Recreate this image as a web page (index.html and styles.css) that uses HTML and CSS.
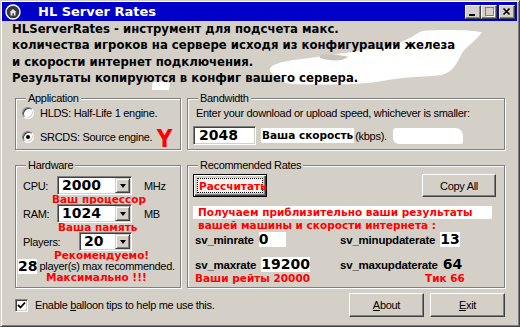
FILE: index.html
```html
<!DOCTYPE html>
<html>
<head>
<meta charset="utf-8">
<title>HL Server Rates</title>
<link rel="stylesheet" href="styles.css">
</head>
<body>
<div class="window">
  <div class="titlebar">
    <svg class="appicon" width="16" height="16" viewBox="0 0 16 16">
      <circle cx="8" cy="8" r="7" fill="#3a3a3a" stroke="#ffffff" stroke-width="1.4"/>
      <path d="M4.5 8.2 L8 5 L11.5 8.2 L10.5 8.2 L10.5 11.5 L5.5 11.5 L5.5 8.2 Z" fill="#e8e8e8"/>
      <rect x="7.3" y="9.3" width="1.6" height="2.2" fill="#3a3a3a"/>
    </svg>
    <span class="title">HL Server Rates</span>
    <div class="controls">
      <span class="cbtn"><svg width="14" height="12" viewBox="0 0 14 12"><rect x="3" y="8" width="6" height="2" fill="#000"/></svg></span>
      <span class="cbtn"><svg width="14" height="12" viewBox="0 0 14 12"><rect x="3.5" y="1.5" width="8" height="8" fill="none" stroke="#808080"/><rect x="3" y="1" width="9" height="1" fill="#808080"/><path d="M4.5 10.5 H12.5 V2.5" fill="none" stroke="#fff"/></svg></span>
      <span class="cbtn close"><svg width="14" height="12" viewBox="0 0 14 12"><path d="M3.5 2.5 L9.5 8.5 M9.5 2.5 L3.5 8.5" stroke="#000" stroke-width="1.6"/></svg></span>
    </div>
  </div>

  <div class="intro">
    <svg class="paint" width="516" height="70" viewBox="0 0 516 70">
      <path d="M420 10 C440 8 470 9 480 11 C476 18 466 24 460 32 C455 42 452 50 440 54 C420 56 400 56 380 60 C360 64 320 64 290 63 C280 62 272 56 268 50 C266 44 280 40 300 38 C330 34 360 30 390 24 C405 20 412 14 420 10 Z" fill="#ffffff"/>
      <path d="M150 62 C156 60 164 60 168 62 L167 69 L150 69 Z" fill="#ffffff"/>
      <path d="M318 34 C328 33 340 34 346 36 L340 39 C332 40 324 39 318 37 Z" fill="#c8c4bc"/>
    </svg>
    <p>HLServerRates - инструмент для подсчета макс.</p>
    <p>количества игроков на сервере исходя из конфигурации железа</p>
    <p>и скорости интернет подключения.</p>
    <p>Результаты копируются в конфиг вашего сервера.</p>
  </div>

  <div class="panels">
    <div class="group app">
      <span class="legend">Application</span>
      <div class="radio-row"><span class="radio"></span><span>HLDS: Half-Life 1 engine.</span></div>
      <div class="radio-row"><span class="radio checked"></span><span>SRCDS: Source engine.</span><span class="mark">Y</span></div>
    </div>

    <div class="group bandwidth">
      <span class="legend">Bandwidth</span>
      <div class="bw-text">Enter your download or upload speed, whichever is smaller:</div>
      <div class="bw-row">
        <div class="field"><span class="big">2048</span></div>
        <span class="speed">Ваша скорость</span><span class="kbps">(kbps).</span>
        <span class="blot"></span>
      </div>
    </div>

    <div class="group hardware">
      <span class="legend">Hardware</span>
      <div class="hw-row">
        <span class="hw-label">CPU:</span>
        <div class="combo w75"><span class="big">2000</span><span class="dd"></span></div>
        <span class="unit">MHz</span>
      </div>
      <div class="red hw-note n1">Ваш процессор</div>
      <div class="hw-row">
        <span class="hw-label">RAM:</span>
        <div class="combo w75"><span class="big">1024</span><span class="dd"></span></div>
        <span class="unit">MB</span>
      </div>
      <div class="red hw-note n2">Ваша память</div>
      <div class="hw-row">
        <span class="hw-label wide">Players:</span>
        <div class="combo w53"><span class="big">20</span><span class="dd"></span></div>
      </div>
      <div class="red hw-note n3">Рекомендуемо!</div>
      <div class="max-row"><span class="big white">28</span><span>player(s) max recommended.</span></div>
      <div class="red hw-note n4">Максимально !!!</div>
    </div>

    <div class="group rates">
      <span class="legend">Recommended Rates</span>
      <div class="btn-row">
        <button class="btn default"><span class="focus red">Рассчитать</span></button>
        <button class="btn">Copy All</button>
      </div>
      <div class="red note first">Получаем приблизительно ваши результаты</div>
      <div class="red note">вашей машины и скорости интернета :</div>
      <div class="rate-grid">
        <div class="rate"><span class="rlabel">sv_minrate</span><span class="big white pad0">0</span></div>
        <div class="rate"><span class="rlabel">sv_minupdaterate</span><span class="big white">13</span></div>
        <div class="rate second"><span class="rlabel">sv_maxrate</span><span class="big white">19200</span></div>
        <div class="rate second"><span class="rlabel">sv_maxupdaterate</span><span class="big">64</span></div>
        <div class="red rnote">Ваши рейты 20000</div>
        <div class="red rnote tick">Тик 66</div>
      </div>
    </div>
  </div>

  <div class="footer">
    <span class="check"><svg width="9" height="9" viewBox="0 0 9 9"><path d="M1 4 L3.5 6.5 L8 1.5" fill="none" stroke="#000" stroke-width="1.8"/></svg></span>
    <span class="check-label">Enable <u>b</u>alloon tips to help me use this.</span>
    <button class="btn fbtn"><u>A</u>bout</button>
    <button class="btn fbtn"><u>E</u>xit</button>
  </div>
</div>
</body>
</html>
```

FILE: styles.css
```css
* { box-sizing: border-box; }
html, body { margin: 0; padding: 0; }
body {
  width: 520px;
  height: 327px;
  overflow: hidden;
  background: #d4d0c8;
  font-family: "Liberation Sans", Arial, sans-serif;
  font-size: 11px;
  letter-spacing: -0.3px;
  color: #000;
}

.window {
  width: 520px;
  height: 327px;
  border: 1px solid;
  border-color: #d4d0c8 #404040 #404040 #d4d0c8;
  box-shadow: inset 1px 1px 0 #fff, inset -1px -1px 0 #808080;
  padding: 1px 2px 2px 1px;
  display: flex;
  flex-direction: column;
  background: #d4d0c8;
}

/* Title bar */
.titlebar {
  height: 19px;
  flex: none;
  background: #0000c8;
  color: #fff;
  display: flex;
  align-items: center;
}
.appicon { margin-left: 3px; flex: none; }
.title {
  margin-left: 17px;
  font-family: "DejaVu Sans", Verdana, sans-serif;
  font-weight: bold;
  font-size: 13px;
  letter-spacing: 0;
}
.controls { margin-left: auto; margin-right: 2px; display: flex; }
.cbtn {
  width: 16px;
  height: 14px;
  background: #d4d0c8;
  border: 1px solid;
  border-color: #fff #404040 #404040 #fff;
  box-shadow: inset -1px -1px 0 #808080;
  display: flex;
}
.cbtn svg { display: block; }
.cbtn.close { margin-left: 2px; }

/* Intro */
.intro {
  position: relative;
  height: 65px;
  flex: none;
  padding-left: 10px;
  font-family: "DejaVu Sans", Verdana, sans-serif;
  font-weight: bold;
  font-size: 11.7px;
  line-height: 16.3px;
  letter-spacing: 0;
}
.intro p { margin: 0; position: relative; }
.paint { position: absolute; left: 0; top: 0; }

/* Panels */
.panels {
  margin-top: 12px;
  margin-left: 13px;
  display: grid;
  grid-template-columns: 166px 318px;
  grid-template-rows: 52px 123px;
  column-gap: 6px;
  row-gap: 15px;
}
.group {
  position: relative;
  border: 1px solid #808080;
  box-shadow: 1px 1px 0 #fff, inset 1px 1px 0 #fff;
}
.legend {
  position: absolute;
  top: -7px;
  left: 10px;
  padding: 0 2px;
  line-height: 13px;
  background: #d4d0c8;
}

/* Application */
.app { padding: 6px 0 0 6px; display: flex; flex-direction: column; gap: 8px; }
.radio-row { height: 16px; display: flex; align-items: center; }
.radio {
  width: 12px;
  height: 12px;
  margin-right: 6px;
  border-radius: 50%;
  background: #fff;
  border: 1px solid;
  border-color: #808080 #fff #fff #808080;
  box-shadow: inset 1px 1px 0 #404040, inset -1px -1px 0 #d4d0c8;
  display: flex;
  align-items: center;
  justify-content: center;
  flex: none;
}
.radio.checked::after {
  content: "";
  width: 4px;
  height: 4px;
  border-radius: 50%;
  background: #000;
}
.mark {
  margin-left: 4px;
  color: #f00;
  font-family: "DejaVu Sans", sans-serif;
  font-weight: bold;
  font-size: 24px;
  line-height: 16px;
  letter-spacing: 0;
  transform: translateY(2px) scaleX(0.9);
}

/* Bandwidth */
.bandwidth { padding: 8px 0 0 8px; }
.bw-text { line-height: 13px; }
.bw-row { margin-top: 6px; margin-left: -3px; display: flex; align-items: center; height: 19px; }
.field {
  width: 63px;
  height: 19px;
  background: #fff;
  border: 1px solid;
  border-color: #808080 #fff #fff #808080;
  box-shadow: inset 1px 1px 0 #404040, inset -1px -1px 0 #d4d0c8;
  padding-left: 5px;
  display: flex;
  align-items: center;
}
.big {
  font-family: "DejaVu Sans", Verdana, sans-serif;
  font-weight: bold;
  font-size: 14px;
  line-height: 15px;
  letter-spacing: 0;
}
.speed {
  margin-left: 5px;
  background: #fff;
  padding: 1px 1px 2px 1px;
  font-family: "DejaVu Sans", Verdana, sans-serif;
  font-weight: bold;
  font-size: 10.5px;
  letter-spacing: 0;
}
.kbps { margin-left: 1px; }
.blot {
  margin-left: 6px;
  width: 70px;
  height: 16px;
  background: #fff;
  border-radius: 3px 8px 2px 6px;
}

/* Hardware */
.hardware { padding: 10px 0 0 7px; }
.hw-row { display: flex; align-items: center; height: 19px; }
.hw-label { width: 34px; }
.hw-label.wide { width: 56px; }
.combo {
  height: 19px;
  background: #fff;
  border: 1px solid;
  border-color: #808080 #fff #fff #808080;
  box-shadow: inset 1px 1px 0 #404040, inset -1px -1px 0 #d4d0c8;
  display: flex;
  align-items: center;
  padding: 1px 1px 1px 4px;
}
.combo.w75 { width: 75px; }
.combo.w53 { width: 53px; }
.dd {
  margin-left: auto;
  width: 15px;
  height: 15px;
  background: #d4d0c8;
  border: 1px solid;
  border-color: #d4d0c8 #404040 #404040 #d4d0c8;
  box-shadow: inset 1px 1px 0 #fff, inset -1px -1px 0 #808080;
  display: flex;
  align-items: center;
  justify-content: center;
}
.dd::after {
  content: "";
  border-left: 3.5px solid transparent;
  border-right: 3.5px solid transparent;
  border-top: 4px solid #000;
  margin-top: 1px;
}
.unit { margin-left: 12px; }
.red {
  color: #f00;
  font-family: "DejaVu Sans", Verdana, sans-serif;
  font-weight: bold;
  font-size: 10.5px;
  letter-spacing: 0;
}
.hw-note { line-height: 9px; }
.n1 { padding-left: 29px; }
.n2 { padding-left: 35px; }
.n3 { padding-left: 31px; }
.n4 { padding-left: 23px; margin-top: 1px; }
.max-row { margin-left: -5px; height: 12px; display: flex; align-items: center; }
.max-row .big { margin-right: 2px; }
.white { background: #fff; }

/* Recommended rates */
.rates { padding: 8px 8px 0 5px; }
.btn-row { display: flex; justify-content: space-between; }
.btn {
  font-family: "Liberation Sans", Arial, sans-serif;
  font-size: 11px;
  letter-spacing: -0.3px;
  color: #000;
  width: 74px;
  height: 23px;
  padding: 0;
  background: #d4d0c8;
  border: 1px solid;
  border-color: #fff #404040 #404040 #fff;
  box-shadow: inset -1px -1px 0 #808080;
  display: flex;
  align-items: center;
  justify-content: center;
}
.btn.default {
  border: 1px solid #000;
  box-shadow: inset 1px 1px 0 #fff, inset -1px -1px 0 #404040, inset -2px -2px 0 #808080;
  padding: 3px;
}
.focus {
  width: 100%;
  height: 100%;
  border: 1px dotted #000;
  background: #f4f2ee;
  display: flex;
  align-items: center;
  justify-content: flex-start;
  padding-left: 1px;
}
.note { line-height: 13px; padding-left: 5px; }
.note.first { margin-top: 9px; background: #fff; margin-right: 4px; }
.rate-grid {
  padding-left: 2px;
  display: grid;
  grid-template-columns: 145px auto;
}
.rate { height: 16px; display: flex; align-items: baseline; }
.rate.second { margin-top: 9px; }
.rlabel { font-weight: bold; font-size: 11.5px; margin-right: 5px; letter-spacing: -0.2px; }
.pad0 { padding-right: 18px; }
.rnote { line-height: 10px; }
.rnote.tick { padding-left: 85px; }

/* Footer */
.footer {
  margin-top: 5px;
  padding-left: 13px;
  display: flex;
  align-items: center;
  height: 24px;
}
.check {
  width: 13px;
  height: 13px;
  background: #fff;
  border: 1px solid;
  border-color: #808080 #fff #fff #808080;
  box-shadow: inset 1px 1px 0 #404040, inset -1px -1px 0 #d4d0c8;
  display: flex;
  align-items: center;
  justify-content: center;
}
.check svg { display: block; }
.check-label { margin-left: 7px; }
.fbtn { width: 75px; height: 24px; margin-left: auto; }
.fbtn + .fbtn { margin-left: 6px; margin-right: 12px; }
```
